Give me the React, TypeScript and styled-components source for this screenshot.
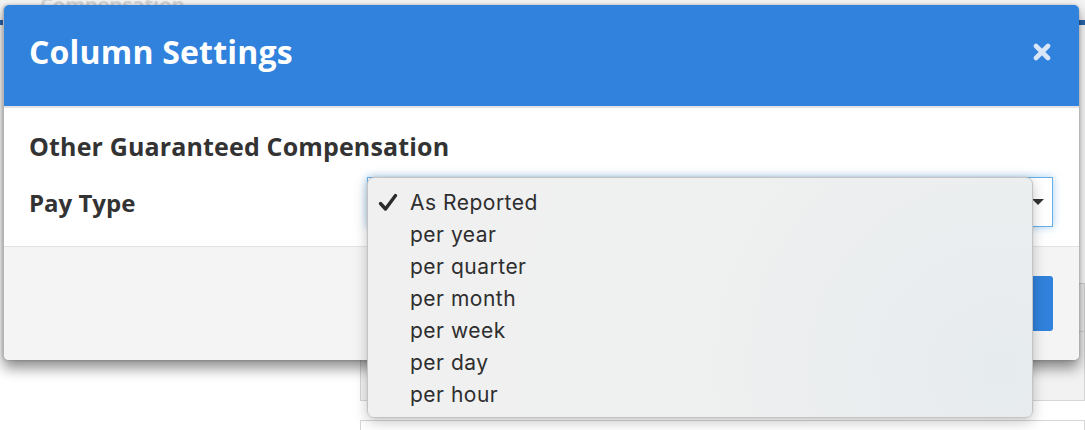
import React from 'react';
import styled, { createGlobalStyle } from 'styled-components';

const GlobalStyle = createGlobalStyle`
	html, body {
		margin: 0;
		padding: 0;
		background: #ffffff;
	}
	body {
		font-family: 'Open Sans', 'Liberation Sans', sans-serif;
		color: #333333;
	}
`;

const PAY_TYPES = ['As Reported', 'per year', 'per quarter', 'per month', 'per week', 'per day', 'per hour'];

const Screen = styled.div`
	position: relative;
	width: 1085px;
	height: 430px;
	overflow: hidden;
	background: #ffffff;
`;

const PageTop = styled.div`
	height: 20px;
	background: #f3f3f3;
	padding-left: 40px;
	font-size: 20px;
	font-weight: 700;
	line-height: 10px;
	color: #d4d4d4;
	overflow: hidden;
`;

const PageRule = styled.div`
	height: 5px;
	background: #2a66b0;
`;

const PageBody = styled.div`
	display: flex;
	flex-direction: column;
	padding-top: 258px;
	padding-left: 360px;
	background: #ffffff;
`;

const PageRow = styled.div<{ $h: number; $shade?: boolean; $gap?: number }>`
	height: ${(p) => p.$h}px;
	margin-top: ${(p) => p.$gap || 0}px;
	border: 1px solid #d6d6d6;
	border-top: ${(p) => (p.$gap ? '1px solid #d6d6d6' : 'none')};
	background: ${(p) => (p.$shade ? '#f2f2f2' : '#ffffff')};
	&:first-child {
		border-top: 1px solid #d6d6d6;
	}
`;

const Modal = styled.div`
	position: absolute;
	left: 3px;
	top: 5px;
	width: 1075px;
	height: 355px;
	display: flex;
	flex-direction: column;
	background: #ffffff;
	border-radius: 5px;
	border-left: 1px solid #b5b5b5;
	box-shadow: 0 8px 14px rgba(0, 0, 0, 0.45), 0 0 3px rgba(0, 0, 0, 0.25);
`;

const Header = styled.div`
	height: 103px;
	flex: none;
	display: flex;
	align-items: center;
	justify-content: space-between;
	padding: 0 26px 8px 25px;
	box-sizing: border-box;
	background: #3182dc;
	border-radius: 5px 5px 0 0;
	border-bottom: 2px solid #e3e3e3;
`;

const Title = styled.h2`
	margin: 0;
	font-size: 32px;
	font-weight: 700;
	color: #ffffff;
	letter-spacing: 0.2px;
`;

const Close = styled.button`
	border: none;
	background: none;
	padding: 0;
	width: 20px;
	height: 20px;
	display: flex;
	align-items: center;
	justify-content: center;
	margin-right: 1px;
	cursor: pointer;
`;

const Body = styled.div`
	flex: none;
	padding: 19px 26px 19px 25px;
	border-bottom: 1px solid #e2e2e2;
`;

const Section = styled.h3`
	margin: 0 0 12px;
	font-size: 25px;
	font-weight: 700;
	line-height: 38px;
	color: #333333;
	letter-spacing: 0.15px;
`;

const FieldRow = styled.div`
	display: grid;
	grid-template-columns: 338px 1fr;
	align-items: center;
`;

const Label = styled.label`
	font-size: 24px;
	font-weight: 700;
	color: #333333;
`;

const SelectBox = styled.div`
	position: relative;
	height: 50px;
	box-sizing: border-box;
	border: 1px solid #66afe9;
	box-shadow: 0 0 8px rgba(102, 175, 233, 0.6);
	background: #ffffff;
	display: flex;
	align-items: center;
	justify-content: flex-end;
	padding-right: 8px;
`;

const Caret = styled.span`
	width: 0;
	height: 0;
	border-left: 6px solid transparent;
	border-right: 6px solid transparent;
	border-top: 6px solid #333333;
`;

const Footer = styled.div`
	flex: 1;
	background: #f4f4f4;
	border-radius: 0 0 5px 5px;
	display: flex;
	justify-content: flex-end;
	align-items: flex-start;
	padding: 29px 26px 0 0;
`;

const SaveButton = styled.button`
	width: 120px;
	height: 55px;
	border: none;
	border-radius: 3px;
	background: #3182dc;
	color: #ffffff;
	font-family: 'Open Sans', 'Liberation Sans', sans-serif;
	font-size: 20px;
	font-weight: 700;
`;

const Menu = styled.ul`
	position: absolute;
	left: -1px;
	top: -1px;
	width: 666px;
	height: 241px;
	box-sizing: border-box;
	margin: 0;
	padding: 8px 0 0;
	list-style: none;
	border: 1px solid #c4c4c4;
	border-radius: 7px;
	background: radial-gradient(circle at 95% 80%, #e6ebee 0%, #eff0f0 45%, #f0f0f0 100%);
	box-shadow: 0 4px 14px rgba(0, 0, 0, 0.22), 0 0 2px rgba(0, 0, 0, 0.1);
	z-index: 2;
`;

const Option = styled.li`
	position: relative;
	height: 32px;
	display: flex;
	align-items: center;
	padding-left: 42px;
	font-family: 'Inter', 'Liberation Sans', sans-serif;
	font-size: 21px;
	letter-spacing: 0.5px;
	color: #2e2e2e;
`;

const Check = styled.svg`
	position: absolute;
	left: 10px;
	top: 7px;
`;

const CloseIcon = () => (
	<svg width='18' height='18' viewBox='0 0 18 18'>
		<path d='M3 3 L15 15 M15 3 L3 15' stroke='#d8e6f7' strokeWidth='4.6' strokeLinecap='round' />
	</svg>
);

const CheckIcon = () => (
	<Check width='20' height='19' viewBox='0 0 20 19'>
		<path d='M2.5 10.5 L7.5 16 L17.5 2.5' fill='none' stroke='#2b2b2b' strokeWidth='3.4' strokeLinecap='round' strokeLinejoin='round' />
	</Check>
);

const App = () => {
	const selected = 'As Reported';
	return (
		<>
			<GlobalStyle />
			<Screen>
				<PageTop>Compensation</PageTop>
				<PageRule />
				<PageBody>
					<PageRow $h={47} $shade />
					<PageRow $h={68} $shade />
					<PageRow $h={40} $gap={19} />
				</PageBody>
				<Modal>
					<Header>
						<Title>Column Settings</Title>
						<Close aria-label='Close'><CloseIcon /></Close>
					</Header>
					<Body>
						<Section>Other Guaranteed Compensation</Section>
						<FieldRow>
							<Label>Pay Type</Label>
							<SelectBox>
								<Caret />
								<Menu>
									{PAY_TYPES.map((item) => (
										<Option key={item}>
											{item === selected && <CheckIcon />}
											{item}
										</Option>
									))}
								</Menu>
							</SelectBox>
						</FieldRow>
					</Body>
					<Footer>
						<SaveButton>Save</SaveButton>
					</Footer>
				</Modal>
			</Screen>
		</>
	);
};

export default App;
